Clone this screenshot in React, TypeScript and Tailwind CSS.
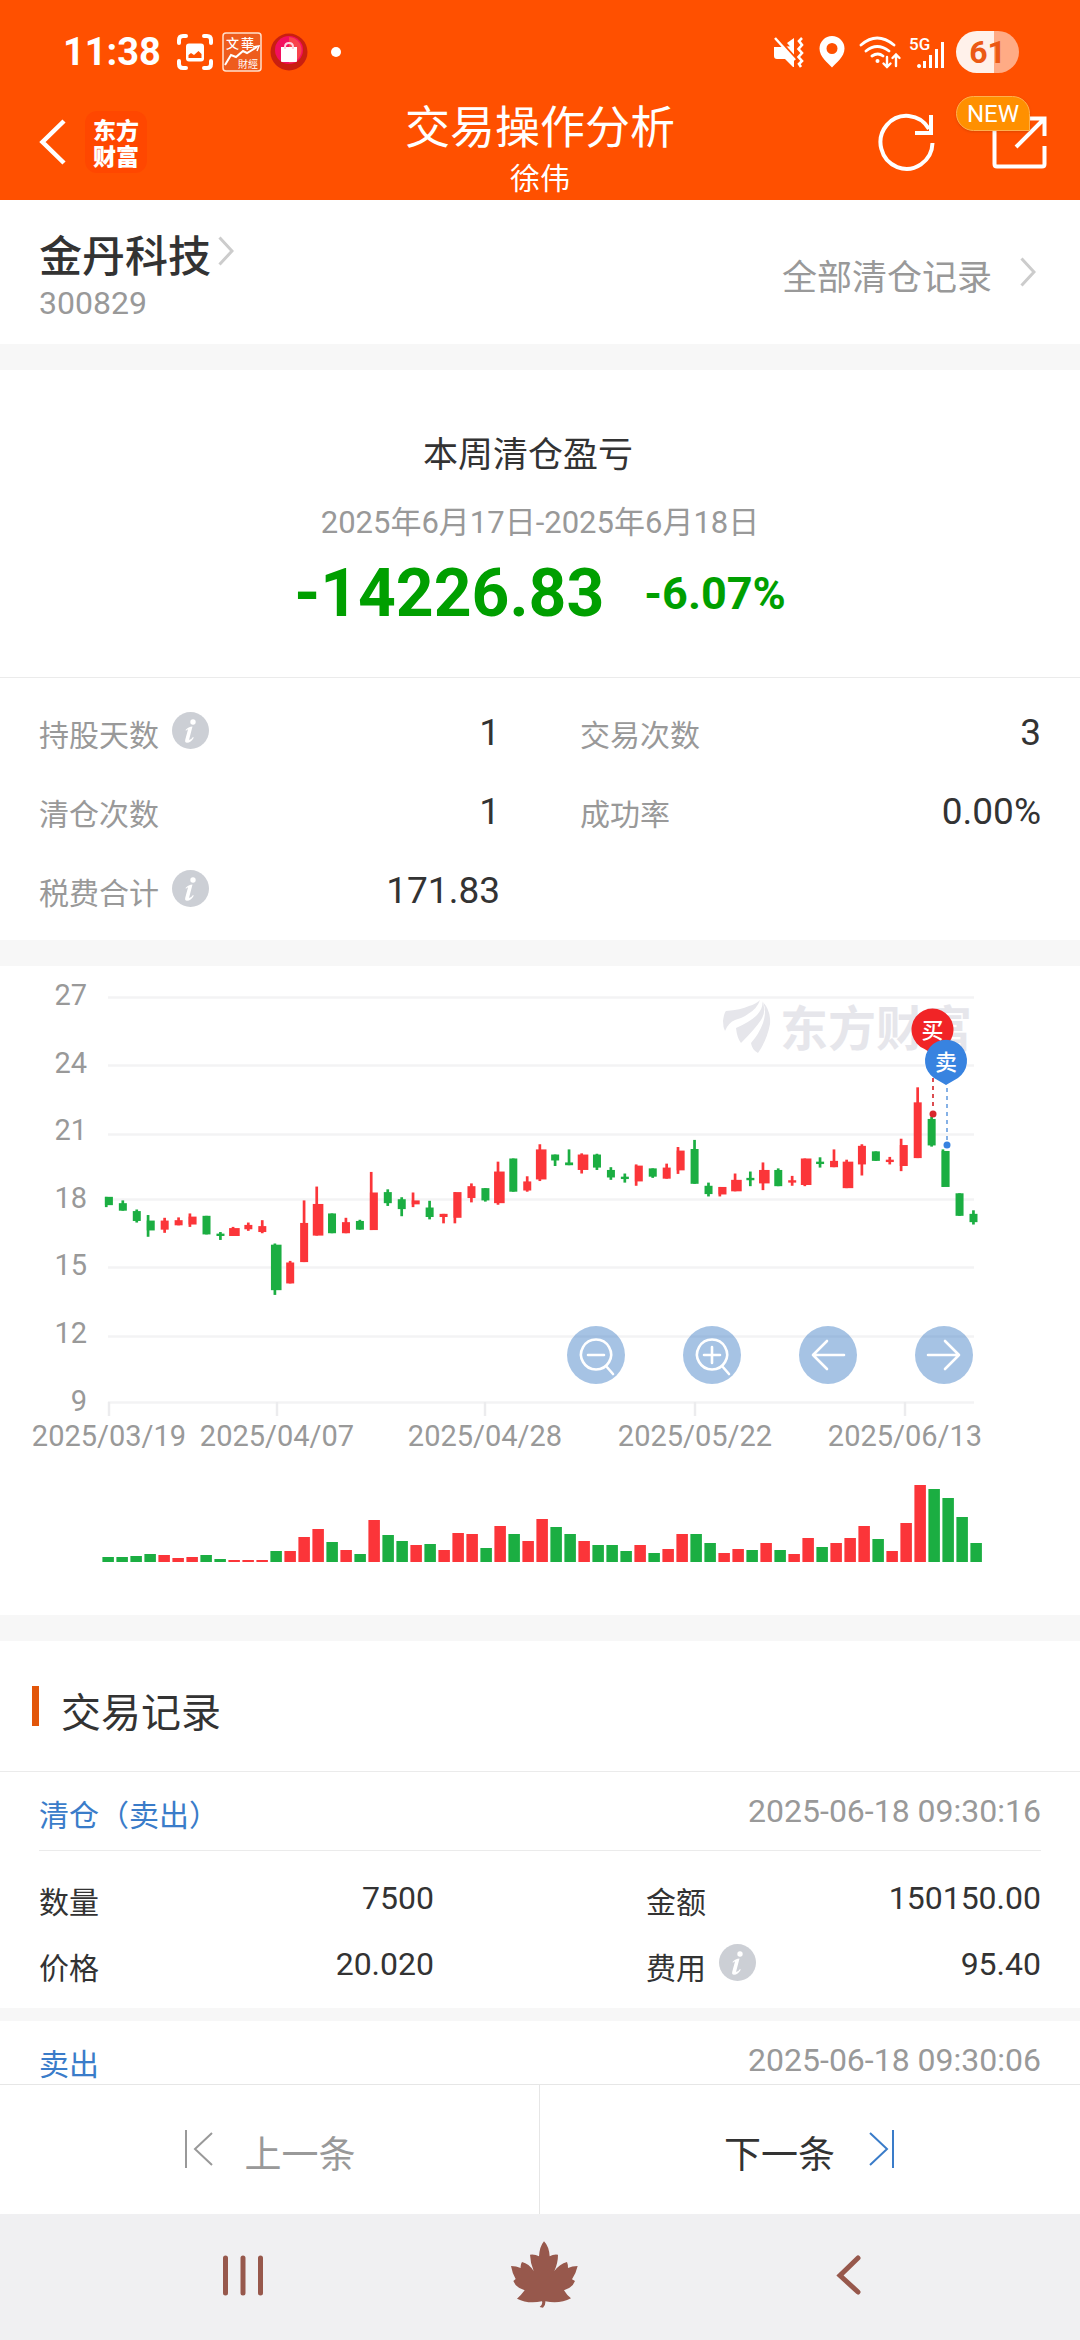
import React from "react";

const CJK = "font-['Noto_Sans_CJK_SC',sans-serif]";

type Candle = [
  color: "r" | "g",
  shape: "n" | "w" | "l",
  top: number,
  bottom: number,
  high: number,
  low: number,
];

// Shape: n = normal body, w = wide body, l = wick on the left edge.
const CANDLES: Candle[] = [
  ["g", "l", 599, 620, 599, 625],
  ["g", "n", 615, 634, 608, 634],
  ["g", "n", 635, 660, 631, 664],
  ["g", "l", 659, 684, 645, 700],
  ["r", "n", 659, 682, 652, 690],
  ["r", "n", 658, 671, 651, 671],
  ["r", "l", 649, 669, 641, 675],
  ["g", "n", 647, 694, 647, 694],
  ["g", "n", 692, 698, 688, 708],
  ["r", "w", 678, 698, 675, 698],
  ["r", "n", 670, 681, 664, 685],
  ["r", "n", 673, 688, 658, 691],
  ["g", "w", 720, 835, 717, 847],
  ["r", "n", 765, 818, 761, 818],
  ["r", "n", 665, 764, 608, 764],
  ["r", "w", 617, 697, 573, 697],
  ["g", "n", 641, 691, 641, 691],
  ["r", "n", 663, 691, 652, 691],
  ["g", "n", 660, 682, 657, 682],
  ["r", "l", 588, 683, 536, 683],
  ["g", "n", 587, 615, 580, 622],
  ["g", "n", 605, 630, 600, 648],
  ["r", "l", 608, 618, 588, 625],
  ["g", "n", 626, 650, 609, 656],
  ["r", "n", 642, 650, 642, 666],
  ["r", "l", 587, 652, 587, 666],
  ["r", "n", 572, 602, 565, 613],
  ["g", "n", 577, 608, 577, 611],
  ["r", "w", 535, 615, 510, 619],
  ["g", "n", 502, 586, 502, 586],
  ["r", "n", 560, 583, 547, 586],
  ["r", "w", 479, 555, 466, 559],
  ["g", "n", 492, 507, 492, 521],
  ["g", "n", 512, 519, 479, 519],
  ["r", "w", 492, 531, 489, 540],
  ["g", "n", 492, 525, 490, 531],
  ["g", "n", 531, 550, 524, 556],
  ["g", "n", 548, 554, 540, 563],
  ["r", "l", 520, 560, 517, 571],
  ["g", "n", 527, 548, 527, 551],
  ["r", "n", 525, 553, 515, 553],
  ["r", "l", 482, 532, 473, 541],
  ["g", "n", 478, 566, 455, 566],
  ["g", "n", 571, 592, 563, 598],
  ["r", "l", 574, 593, 574, 598],
  ["r", "w", 556, 585, 540, 585],
  ["g", "n", 551, 557, 535, 572],
  ["r", "w", 531, 565, 512, 582],
  ["g", "n", 531, 572, 527, 572],
  ["r", "n", 557, 563, 546, 571],
  ["r", "w", 502, 569, 502, 572],
  ["g", "n", 510, 516, 499, 525],
  ["r", "n", 508, 524, 479, 524],
  ["r", "w", 510, 577, 505, 577],
  ["r", "n", 470, 517, 466, 545],
  ["g", "n", 484, 508, 484, 508],
  ["r", "n", 505, 511, 498, 517],
  ["r", "l", 468, 521, 452, 534],
  ["r", "n", 360, 501, 322, 501],
  ["g", "n", 402, 469, 397, 472],
  ["g", "l", 483, 574, 479, 574],
  ["g", "n", 590, 647, 590, 647],
  ["g", "n", 642, 663, 633, 669],
];

const VOLUMES = [
  5, 5, 6, 8, 7, 4, 5, 7, 3, 2, 2, 2, 11, 11, 25, 33, 20, 12, 8, 42, 27, 21, 17,
  18, 12, 29, 28, 14, 36, 28, 21, 43, 35, 28, 21, 17, 17, 11, 17, 9, 13, 28, 28,
  19, 9, 13, 12, 19, 12, 8, 24, 15, 19, 24, 36, 23, 11, 39, 77, 73, 64, 45, 19,
];

const COLORS = { r: "#fb3539", g: "#1bae42" };

const PRICE_LINES: [string, number][] = [
  ["27", 37],
  ["24", 105],
  ["21", 174],
  ["18", 239],
  ["15", 307],
  ["12", 376],
  ["9", 442],
];

const DATES: [string, number][] = [
  ["2025/03/19", 109],
  ["2025/04/07", 277],
  ["2025/04/28", 485],
  ["2025/05/22", 695],
  ["2025/06/13", 905],
];

function StatusBar() {
  return (
    <div className="flex h-[84px] items-center justify-between pt-5 pr-[61px] pl-[63px] text-white">
      <div className="flex items-center">
        <span className="text-[38px] leading-none font-bold">11:38</span>
        <svg className="ml-[16px] h-9 w-9" viewBox="0 0 36 36" fill="none" stroke="white" strokeWidth="4" strokeLinecap="round" strokeLinejoin="round">
          <path d="M2 9V6q0-4 4-4h3M27 2h3q4 0 4 4v3M34 27v3q0 4-4 4h-3M9 34H6q-4 0-4-4v-3" />
          <path d="M12 9.500h12q3 0 3 3v12q0 3-3 3H12q-3 0-3-3v-12q0-3 3-3z" fill="white" stroke="none" />
          <path d="M11.500 24v-3l2.500-2 3 2 4.500-4 3 3v4z" stroke="none" fill="#ff5000" />
        </svg>
        <svg className="ml-[9px] h-10 w-10" viewBox="0 0 40 40" fill="none">
          <rect x="1" y="1" width="38" height="38" rx="3" fill="#ee5c1d" stroke="#ffe0cc" strokeWidth="1.500" />
          <text x="4" y="16" fontSize="13" fontWeight="500" fill="#fff" fontFamily="Noto Sans CJK TC">文</text>
          <text x="19" y="16" fontSize="13" fontWeight="500" fill="#fff" fontFamily="Noto Sans CJK TC">華</text>
          <path d="M3 33l6-10 5 2 7-6 4 2 10-6" stroke="#fff" strokeWidth="2" />
          <path d="M31 15l6-1-2 5" stroke="#fff" strokeWidth="1.500" />
          <text x="16" y="36" fontSize="10" fill="#fff" fontFamily="Noto Sans CJK TC">財經</text>
        </svg>
        <svg className="ml-[8px] h-[38px] w-[38px]" viewBox="0 0 38 38">
          <circle cx="19" cy="19" r="18.500" fill="#c91f10" />
          <circle cx="19" cy="17" r="14" fill="#f2105f" />
          <path d="M19 4a13 13 0 0 1 12 17 13 13 0 0 1-12 9z" fill="#f8434c" />
          <path d="M11 14h16v14q0 1-1 1H12q-1 0-1-1z" fill="#fff" />
          <path d="M15 16v-2q0-4 4-4t4 4v2" fill="none" stroke="#ffd3df" strokeWidth="2" />
        </svg>
        <span className="ml-[23px] h-[10px] w-[10px] rounded-full bg-white" />
      </div>
      <div className="flex items-center">
        <svg className="h-[32px] w-[32px]" viewBox="0 0 32 32" fill="white">
          <path d="M1 11h6l14-1v21h-1l-8-8H4q-3 0-3-3z" />
          <path d="M14 7l7-5v13z" />
          <path d="M4 2l19 21" stroke="#ff5000" strokeWidth="3" />
          <path d="M2 2l20 22" stroke="white" strokeWidth="2.500" />
          <path d="M29 2l-3 3 3 4-3.500 4 3.500 4-3.500 4 3.500 4-3 3 2 3" fill="none" stroke="white" strokeWidth="2.600" />
        </svg>
        <svg className="ml-[14px] h-[32px] w-[26px]" viewBox="0 0 26 32" fill="white">
          <path fillRule="evenodd" d="M13 0a12.500 12.500 0 0 1 12.500 12.500C25.500 21 17 27 13 31.500 9 27 .5 21 .5 12.500A12.500 12.500 0 0 1 13 0zm0 7a5.500 5.500 0 1 0 0 11 5.500 5.500 0 0 0 0-11z" />
        </svg>
        <svg className="ml-[14px] h-[34px] w-[44px]" viewBox="0 0 44 34" fill="none" stroke="white" strokeWidth="2.800" strokeLinecap="round">
          <path d="M2 10q16-14 33 0M7 16q11-9 23 0M13 21q6-4 11 0" />
          <circle cx="18.500" cy="26" r="2" fill="white" stroke="none" />
          <path d="M28 22v10M24.500 28.500L28 32l3.500-3.500M37 31V20M33.500 23l3.500-3.500 3.500 3.500" strokeWidth="2.400" />
        </svg>
        <svg className="ml-[6px] h-[34px] w-[38px]" viewBox="0 0 38 34" fill="white">
          <text x="0" y="15" fontSize="17" fontWeight="500" fontFamily="Roboto">5G</text>
          <path d="M10 33a2 2 0 1 1 .1 0zM14 26h3v7h-3zM20 20h3v13h-3zM26 14h3v19h-3zM32 7h3v26h-3z" />
        </svg>
        <div className="ml-[9px] flex h-[42px] w-[63px] items-center justify-center rounded-full bg-linear-to-r from-[#fff1ea] from-60% to-[#ffab85] to-60% text-[32px] leading-none font-bold text-[#eb5914]">
          61
        </div>
      </div>
    </div>
  );
}

function AppBar() {
  return (
    <div className="grid h-[116px] grid-cols-[1fr_auto_1fr] items-center px-[32px] text-white">
      <div className="flex items-center pl-[7px]">
        <button type="button" aria-label="返回" className="w-[46px]">
          <svg className="h-[48px] w-[28px]" viewBox="0 0 28 48" fill="none" stroke="white" strokeWidth="4.500">
            <path d="M25 3L3.500 24 25 45" />
          </svg>
        </button>
        <button type="button" className={`flex h-[62px] w-[62px] flex-col items-center justify-center rounded-xl bg-[#ff4700] text-[23px] leading-[26px] font-black ${CJK}`}>
          <span>东方</span>
          <span>财富</span>
        </button>
      </div>
      <div className={`flex flex-col items-center pt-3 text-center ${CJK}`}>
        <h1 className="text-[45px] leading-[56px] font-normal">交易操作分析</h1>
        <p className="text-[30px] leading-[46px]">徐伟</p>
      </div>
      <div className="flex items-center justify-end gap-[56px]">
        <button type="button" aria-label="刷新">
          <svg className="h-[58px] w-[58px]" viewBox="0 0 58 58" fill="none" stroke="white" strokeWidth="4">
            <path d="M54.500 30A26 26.500 0 1 1 51 16" />
            <path d="M53 2v18H37" />
          </svg>
        </button>
        <button type="button" aria-label="分享" className="relative">
          <svg className="h-[56px] w-[56px]" viewBox="0 0 56 56" fill="none" stroke="white" strokeWidth="4">
            <path d="M2.500 12v38q0 2.500 2.500 2.500h45q2.500 0 2.500-2.500V32" />
            <path d="M36 4.500h16.500V22M52 5L24 33" />
          </svg>
          <span className="absolute -top-[18px] -left-[36px] flex h-[35px] w-[74px] items-center justify-center rounded-full rounded-br-none border border-[#ffb04d] bg-[#ff9000] text-[24px] leading-none shadow">
            NEW
          </span>
        </button>
      </div>
    </div>
  );
}

function Chevron({ className }: { className: string }) {
  return (
    <svg className={`h-[30px] w-[16px] ${className}`} viewBox="0 0 16 30" fill="none" stroke="#ccc" strokeWidth="3">
      <path d="M1.500 1.500L14 15 1.500 28.500" />
    </svg>
  );
}

function StockHeader() {
  return (
    <section className="flex items-center justify-between pt-[23px] pr-[44px] pb-[20px] pl-[39px]">
      <div>
        <a href="#stock" className={`flex items-center text-[43px] leading-[60px] font-medium text-[#333] ${CJK}`}>
          金丹科技
          <Chevron className="mb-1 ml-[7px]" />
        </a>
        <p className="text-[32px] leading-[41px] text-[#999]">300829</p>
      </div>
      <a href="#records" className={`flex items-center text-[35px] text-[#999] ${CJK}`}>
        <span className="pt-1">全部清仓记录</span>
        <Chevron className="mb-1 ml-[28px]" />
      </a>
    </section>
  );
}

function InfoButton({ label }: { label: string }) {
  return (
    <button type="button" aria-label={label} className="mb-1 ml-[13px]">
      <svg className="h-[37px] w-[37px]" viewBox="0 0 37 37">
        <circle cx="18.500" cy="18.500" r="18.500" fill="#cccfd5" />
        <circle cx="21" cy="10" r="2.700" fill="#fff" />
        <path d="M13.500 18q3-3.500 7-3.500l-3.500 13.500q2 0 4-3l.8.800q-3 5-6.800 5-2.500 0-1.700-3.300l2.700-10q-1 0-2 1.300z" fill="#fff" />
      </svg>
    </button>
  );
}

function Divider({ tall = true }: { tall?: boolean }) {
  return <div className={tall ? "h-[26px] shrink-0 bg-[#f7f7f7]" : "h-[13px] shrink-0 bg-[#f7f7f7]"} />;
}

function Summary() {
  return (
    <section className="flex flex-col items-center border-b border-[#ebebeb] pt-[57px] pb-[43px]">
      <h2 className={`pr-6 text-[35px] leading-[50px] font-normal text-[#333] ${CJK}`}>本周清仓盈亏</h2>
      <p className="mt-[28px] text-[31px] leading-[36px] text-[#999]">2025年6月17日-2025年6月18日</p>
      <p className="mt-[13px] flex items-center gap-[40px] font-bold text-[#009f00]">
        <span className="text-[66px] leading-[80px]">-14226.83</span>
        <span className="text-[45px] leading-[80px]">-6.07%</span>
      </p>
    </section>
  );
}

function Stat({ label, value, info }: { label: string; value: string; info?: boolean }) {
  return (
    <div className="flex h-[79px] items-center justify-between">
      <dt className={`flex items-center text-[30px] text-[#999] ${CJK}`}>
        <span className="pt-0.5">{label}</span>
        {info && <InfoButton label={`${label}说明`} />}
      </dt>
      <dd className="text-[37px] text-[#333]">{value}</dd>
    </div>
  );
}

function Stats() {
  return (
    <dl className="grid grid-cols-2 gap-x-[80px] px-[39px] pt-[15px] pb-[10px]">
      <Stat label="持股天数" value="1" info />
      <Stat label="交易次数" value="3" />
      <Stat label="清仓次数" value="1" />
      <Stat label="成功率" value="0.00%" />
      <Stat label="税费合计" value="171.83" info />
    </dl>
  );
}

function CandleShape({ candle, index }: { candle: Candle; index: number }) {
  const [color, shape, top, bottom, high, low] = candle;
  const width = shape === "w" ? 10.6 : 8;
  const left = 108.9 + index * 13.945 - width / 2;
  const wick = shape === "l" ? left : left + 2.6;
  return (
    <g fill={COLORS[color]}>
      <rect x={wick} y={high} width="2.700" height={low - high} />
      <rect x={left} y={top} width={width} height={bottom - top} />
    </g>
  );
}

function ChartSvg() {
  return (
    <svg className="block h-auto w-full" viewBox="0 6 1080 649" role="img" aria-label="股价K线图" fontFamily="Roboto, sans-serif">
      <g stroke="#f3f3f4" strokeWidth="2.500">
        {PRICE_LINES.map(([label, y]) => (
          <path key={label} d={`M108 ${y + 0.5}H974`} />
        ))}
      </g>
      <g stroke="#ececee" strokeWidth="2.500">
        {DATES.map(([label, x]) => (
          <path key={label} d={`M${x} 442v14`} />
        ))}
      </g>
      <g fill="#999" fontSize="29">
        {PRICE_LINES.map(([label], i) => (
          <text key={label} x="87" y={Math.round(45 + i * 67.6)} textAnchor="end">{label}</text>
        ))}
        {DATES.map(([label, x]) => (
          <text key={label} x={x} y="486" textAnchor="middle">{label}</text>
        ))}
      </g>
      <g fill="#e6e6eb">
        <path d="M723 61q1-8 3-10 15-1 23-5 7-2 11-6-3 9-12 14-5 4-13 6-7 3-10 11-2-4-2-10z" />
        <path d="M736 68q14-6 21-13 7-8 5-14 5 9-1 19-6 9-20 23-4-5-5-15z" />
        <path d="M751 83q8-9 12-20 4-12 0-21 8 9 7 22-3 16-12 29-6-3-7-10z" />
        <text x="780" y="86" fontSize="48" fontWeight="700" fontFamily="Noto Sans CJK SC">东方财富</text>
      </g>
      <g transform="scale(1 0.3954)">
        {CANDLES.map((candle, i) => (
          <CandleShape key={i} candle={candle} index={i} />
        ))}
      </g>
      {VOLUMES.map((height, i) => (
        <rect key={i} x={102.4 + i * 14} y={602 - height} width="11.500" height={height} fill={COLORS[CANDLES[i][0]]} />
      ))}
      <path d="M933 118v30" stroke="#d83a3e" strokeWidth="1.800" strokeDasharray="4 4" />
      <path d="M947 128v54" stroke="#79a9e4" strokeWidth="1.800" strokeDasharray="4 4" />
      <circle cx="933" cy="154" r="3.500" fill="#d8282c" />
      <circle cx="947" cy="185" r="3.500" fill="#3883e0" />
      <g fontSize="22" fontWeight="500" textAnchor="middle" fontFamily="Noto Sans CJK SC">
        <path d="M932.500 94l-8-5a21 21 0 1 1 16 0z" fill="#f12426" />
        <text x="932.500" y="78" fill="#fff">买</text>
        <path d="M946 125l-12-7a21 21 0 1 1 24 0z" fill="#3883e0" />
        <text x="946" y="110" fill="#fff">卖</text>
      </g>
    </svg>
  );
}

const TOOLS = [
  { label: "缩小", d: "M29 13.500a15 15 0 1 0 .1 0zM21 29h16M39 40l7 8" },
  { label: "放大", d: "M29 13.500a15 15 0 1 0 .1 0zM21 29h16M29 21v16M39 40l7 8" },
  { label: "向左", d: "M45 29H14M28 15L14 29l14 14" },
  { label: "向右", d: "M13 29h31M30 15l14 14-14 14" },
];

function Chart() {
  return (
    <section className="relative">
      <ChartSvg />
      <div className="absolute top-[360px] right-[107px] flex gap-[58px]">
        {TOOLS.map((tool) => (
          <button key={tool.label} type="button" aria-label={tool.label} className="rounded-full bg-[#3a7bc4]/45">
            <svg className="h-[58px] w-[58px]" viewBox="0 0 58 58" fill="none" stroke="white" strokeWidth="2.600" strokeLinecap="round" strokeLinejoin="round">
              <path d={tool.d} />
            </svg>
          </button>
        ))}
      </div>
    </section>
  );
}

function RecordField({ label, value, info }: { label: string; value: string; info?: boolean }) {
  return (
    <div className="flex h-[66px] items-center justify-between text-[#333]">
      <dt className={`flex items-center text-[30px] ${CJK}`}>
        <span className="pt-1">{label}</span>
        {info && <InfoButton label={`${label}说明`} />}
      </dt>
      <dd className="text-[32px]">{value}</dd>
    </div>
  );
}

function RecordHead({ title, time }: { title: string; time: string }) {
  return (
    <div className="mx-[39px] flex h-[79px] items-center justify-between border-b border-[#ebebeb]">
      <h3 className={`pt-1 text-[30px] font-normal text-[#3a7cc9] ${CJK}`}>{title}</h3>
      <time className="text-[32px] text-[#999]">{time}</time>
    </div>
  );
}

function Records() {
  return (
    <section>
      <div className="flex h-[131px] items-center border-b border-[#ebebeb] pl-[32px]">
        <span className="h-[40px] w-[7px] bg-[#e2560a]" />
        <h2 className={`ml-[22px] pt-2 text-[40px] leading-[50px] font-normal text-[#333] ${CJK}`}>交易记录</h2>
      </div>
      <RecordHead title="清仓（卖出）" time="2025-06-18 09:30:16" />
      <dl className="grid grid-cols-2 gap-x-[212px] px-[39px] pt-[14px] pb-[11px]">
        <RecordField label="数量" value="7500" />
        <RecordField label="金额" value="150150.00" />
        <RecordField label="价格" value="20.020" />
        <RecordField label="费用" value="95.40" info />
      </dl>
      <Divider tall={false} />
      <RecordHead title="卖出" time="2025-06-18 09:30:06" />
    </section>
  );
}

function Pager() {
  return (
    <nav className={`grid h-[130px] shrink-0 grid-cols-2 border-t border-[#e6e6e6] bg-white text-[37px] ${CJK}`}>
      <button type="button" className="flex items-center justify-center border-r border-[#e6e6e6] pt-1.5 text-[#999]">
        <svg className="mb-2 h-[38px] w-[30px]" viewBox="0 0 30 38" fill="none" stroke="currentColor" strokeWidth="2">
          <path d="M2 0v38M28 3L11 19l17 16" />
        </svg>
        <span className="ml-[31px]">上一条</span>
      </button>
      <button type="button" className="flex items-center justify-center pt-1.5 text-[#333]">
        <span>下一条</span>
        <svg className="mb-2 ml-[33px] h-[38px] w-[28px] text-[#3a7cc9]" viewBox="0 0 28 38" fill="none" stroke="currentColor" strokeWidth="2">
          <path d="M25 0v38M2 3l17 16L2 35" />
        </svg>
      </button>
    </nav>
  );
}

function SystemNav() {
  return (
    <nav className="flex h-[126px] shrink-0 items-center justify-between bg-[#f0f0f2] pr-[217px] pb-1 pl-[222px] text-[#97584c]">
      <button type="button" aria-label="最近任务">
        <svg className="h-[42px] w-[42px]" viewBox="0 0 42 42" stroke="currentColor" strokeWidth="5" strokeLinecap="round">
          <path d="M3.500 4v35M21 4v35M38.500 4v35" />
        </svg>
      </button>
      <button type="button" aria-label="主屏幕" className="mr-3">
        <svg className="h-[68px] w-[68px]" viewBox="61 36 204 204" fill="currentColor">
          <path d="M163 37Q150 52 148 82Q136 75 121 77Q122 102 132 126Q118 104 97 99Q92 106 93 117Q80 111 64 111Q68 134 78 150L71 156Q78 176 105 184Q95 198 82 209Q115 226 157 217Q160 226 150 234L160 236Q168 230 167 217Q210 226 244 208Q231 198 223 184Q249 176 256 156L247 151Q259 133 264 111Q247 111 235 117Q235 106 232 99Q210 105 194 126Q205 102 205 77Q191 75 180 82Q178 52 163 37Z" />
        </svg>
      </button>
      <button type="button" aria-label="返回上一页">
        <svg className="h-[42px] w-[28px]" viewBox="0 0 28 42" fill="none" stroke="currentColor" strokeWidth="5" strokeLinecap="round">
          <path d="M23 4L5 21.500 23 38" />
        </svg>
      </button>
    </nav>
  );
}

export default function App() {
  return (
    <div className="flex h-screen flex-col bg-white font-[Roboto,'Noto_Sans_CJK_SC',sans-serif]">
      <header className="shrink-0 bg-[#ff5000]">
        <StatusBar />
        <AppBar />
      </header>
      <main className="min-h-0 flex-1 overflow-hidden">
        <StockHeader />
        <Divider />
        <Summary />
        <Stats />
        <Divider />
        <Chart />
        <Divider />
        <Records />
      </main>
      <Pager />
      <SystemNav />
    </div>
  );
}
